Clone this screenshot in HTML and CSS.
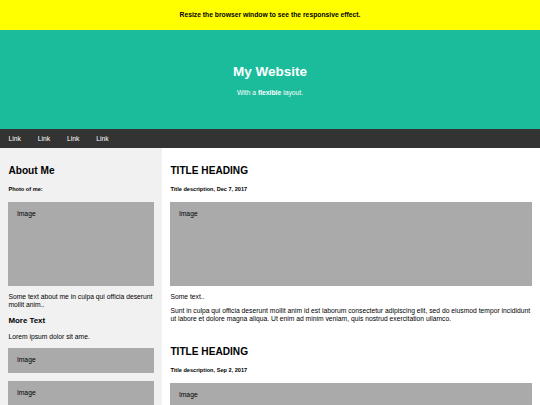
FILE: index.html
```html
<!DOCTYPE html>
<html lang="en">
<head>
<meta charset="utf-8">
<title>My Website</title>
<link rel="stylesheet" href="styles.css">
</head>
<body>
<div class="notice">
  <h4>Resize the browser window to see the responsive effect.</h4>
</div>
<div class="header">
  <h1>My Website</h1>
  <p>With a <b>flexible</b> layout.</p>
</div>
<div class="navbar">
  <a href="#">Link</a>
  <a href="#">Link</a>
  <a href="#">Link</a>
  <a href="#">Link</a>
</div>
<div class="row">
  <div class="side">
    <h2>About Me</h2>
    <h5>Photo of me:</h5>
    <div class="fakeimg tall">Image</div>
    <p>Some text about me in culpa qui officia deserunt mollit anim..</p>
    <h3>More Text</h3>
    <p>Lorem ipsum dolor sit ame.</p>
    <div class="fakeimg short">Image</div><br>
    <div class="fakeimg short">Image</div><br>
    <div class="fakeimg short">Image</div>
  </div>
  <div class="main">
    <h2>TITLE HEADING</h2>
    <h5>Title description, Dec 7, 2017</h5>
    <div class="fakeimg tall">Image</div>
    <p>Some text..</p>
    <p>Sunt in culpa qui officia deserunt mollit anim id est laborum consectetur adipiscing elit, sed do eiusmod tempor incididunt ut labore et dolore magna aliqua. Ut enim ad minim veniam, quis nostrud exercitation ullamco.</p>
    <br>
    <h2>TITLE HEADING</h2>
    <h5>Title description, Sep 2, 2017</h5>
    <div class="fakeimg tall">Image</div>
    <p>Some text..</p>
    <p>Sunt in culpa qui officia deserunt mollit anim id est laborum consectetur adipiscing elit, sed do eiusmod tempor incididunt ut labore et dolore magna aliqua. Ut enim ad minim veniam, quis nostrud exercitation ullamco.</p>
  </div>
</div>
<div class="footer">
  <h2>Footer</h2>
</div>
</body>
</html>
```

FILE: styles.css
```css
* {
  box-sizing: border-box;
}

html {
  overflow: hidden;
}

body {
  margin: 0;
  font-family: "Liberation Sans", Arial, sans-serif;
  font-size: 6.75px;
  line-height: 1.15;
  color: #000;
}

p {
  margin: 6.75px 0;
}

h2 {
  font-size: 10.13px;
  margin: 8.4px 0;
}

h3 {
  font-size: 7.9px;
  margin: 7.9px 0;
}

h5 {
  font-size: 5.6px;
  margin: 9.36px 0;
}

.notice {
  background: #ffff00;
  padding: 2.11px;
}

.notice h4 {
  text-align: center;
  font-size: 6.75px;
  margin: 8.98px 0;
}

.header {
  padding: 25.31px;
  text-align: center;
  background: #1abc9c;
  color: #fff;
}

.header h1 {
  font-size: 13.5px;
  margin: 9.05px 0;
}

.navbar {
  display: flex;
  background-color: #333;
}

.navbar a {
  color: #fff;
  padding: 5.9px 8.44px;
  text-decoration: none;
  text-align: center;
}

.row {
  display: flex;
  flex-wrap: wrap;
}

.side {
  flex: 30%;
  background-color: #f1f1f1;
  padding: 8.44px;
}

.main {
  flex: 70%;
  background-color: #fff;
  padding: 8.44px;
}

.fakeimg {
  background-color: #aaa;
  width: 100%;
  padding: 8.44px;
}

.fakeimg.tall {
  height: 84.38px;
}

.fakeimg.short {
  height: 25.31px;
}

.footer {
  padding: 8.44px;
  text-align: center;
  background: #ddd;
}
```
